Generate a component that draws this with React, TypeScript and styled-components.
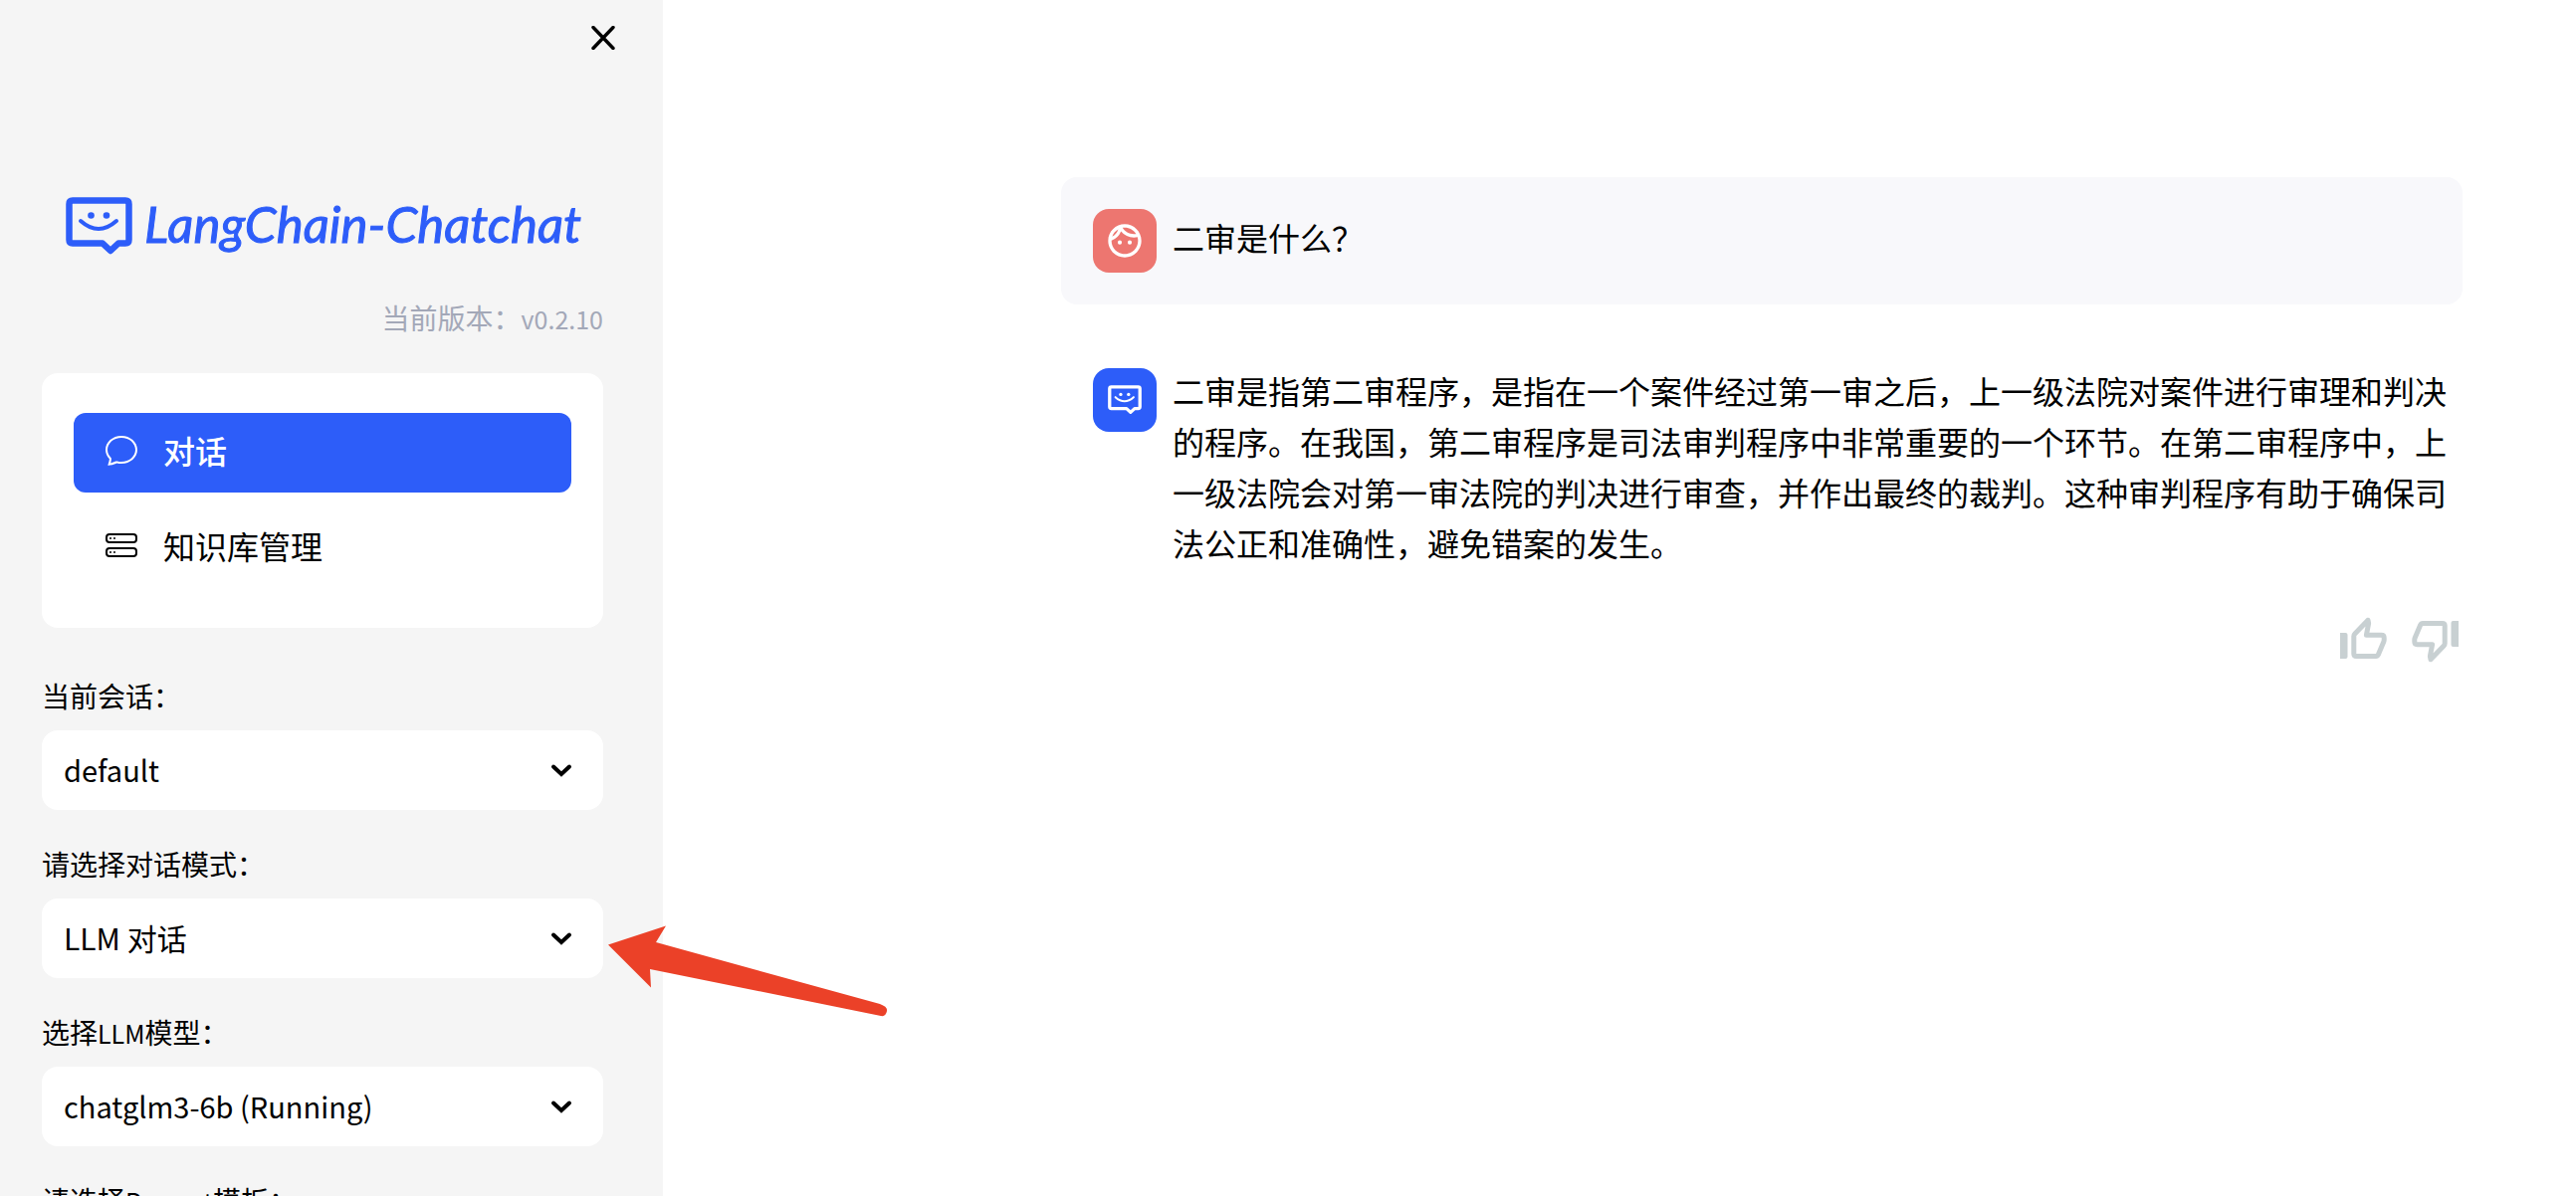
import React from "react";
import styled, { createGlobalStyle } from "styled-components";
import { BsChat, BsHddStack } from "react-icons/bs";
import { MdOutlineFace } from "react-icons/md";

const BLUE = "#2d5df9";

const GlobalStyle = createGlobalStyle`
  *, *::before, *::after { box-sizing: border-box; }
  html, body, #root { height: 100%; }
  body {
    margin: 0;
    background: #fff;
    color: #000;
    font-family: "Noto Sans CJK SC", sans-serif;
    font-size: 32px;
    overflow: hidden;
  }
  button, select { font-family: inherit; color: inherit; }
  svg { flex-shrink: 0; }
`;

const Page = styled.div`
  display: flex;
  height: 100vh;
  overflow: hidden;
`;

const Sidebar = styled.aside`
  position: relative;
  display: flex;
  flex-direction: column;
  flex: 0 0 666px;
  padding: 198px 60px 0 42px;
  background: #f5f5f5;
  overflow: hidden;

  > * { flex-shrink: 0; }
`;

const CloseButton = styled.button`
  position: absolute;
  top: 22px;
  right: 44px;
  display: flex;
  padding: 4px;
  border: 0;
  background: none;
  cursor: pointer;
`;

const Brand = styled.div`
  display: flex;
  align-items: flex-start;
  gap: 12px;
  height: 60px;
  padding-left: 24px;
  color: ${BLUE};
`;

const Wordmark = styled.h1`
  margin: 0;
  font: italic 400 51px/54px Lato, "Liberation Sans", sans-serif;
  white-space: nowrap;
  -webkit-text-stroke: 1px ${BLUE};
`;

const Version = styled.p`
  margin: 40px 0 34px;
  font-size: 28px;
  line-height: 43px;
  color: #a3a8b8;
  text-align: right;
`;

const Latin = styled.span`
  font-size: 25px;
  line-height: 1;
`;

const Menu = styled.nav`
  display: flex;
  flex-direction: column;
  gap: 16px;
  margin-bottom: 48px;
  padding: 40px 32px;
  border-radius: 16px;
  background: #fff;
`;

const MenuItem = styled.a<{ $active?: boolean }>`
  display: flex;
  align-items: center;
  gap: 26px;
  height: 80px;
  padding: 0 32px 6px;
  border-radius: 12px;
  background: ${(p) => (p.$active ? BLUE : "transparent")};
  color: ${(p) => (p.$active ? "#fff" : "#000")};
  font-weight: ${(p) => (p.$active ? 500 : 400)};
  line-height: 48px;
  text-decoration: none;
`;

const Field = styled.div`
  margin-bottom: 34px;
`;

const Label = styled.label`
  display: block;
  margin-bottom: 15px;
  font-size: 28px;
  line-height: 40px;
`;

const SelectBox = styled.div`
  display: grid;
  grid-template-columns: 1fr 64px;
  align-items: center;
  border-radius: 16px;
  background: #fff;

  > * { grid-row: 1; }
  > svg { grid-column: 2; pointer-events: none; }
`;

const Select = styled.select<{ $latin?: boolean }>`
  grid-column: 1 / -1;
  width: 100%;
  height: 80px;
  padding: 0 64px 3px 22px;
  border: 0;
  border-radius: 16px;
  background: transparent;
  font-size: ${(p) => (p.$latin ? 29 : 30)}px;
  appearance: none;
`;

const Main = styled.main`
  display: flex;
  flex-direction: column;
  flex: 1;
  gap: 32px;
  min-width: 0;
  padding: 178px 114px 0 400px;
`;

const MessageText = styled.p`
  flex: 1;
  margin: 0;
  line-height: 51px;
`;

const Message = styled.article<{ $user?: boolean }>`
  display: flex;
  gap: 16px;
  padding: 32px 16px 32px 32px;
  border-radius: 16px;
  background: ${(p) => (p.$user ? "#f8f8fb" : "transparent")};

  ${MessageText} { margin-top: ${(p) => (p.$user ? 3 : -3)}px; }
`;

const Avatar = styled.div<{ $color: string }>`
  display: flex;
  flex: 0 0 64px;
  align-items: center;
  justify-content: center;
  height: 64px;
  border-radius: 16px;
  background: ${(p) => p.$color};
  color: #fff;
`;

const Feedback = styled.div`
  display: flex;
  justify-content: flex-end;
  gap: 25px;
  margin-top: -15px;
  padding-right: 4px;
`;

const FeedbackButton = styled.button`
  display: flex;
  padding: 0;
  border: 0;
  background: none;
  cursor: pointer;
`;

const Pointer = styled.svg`
  position: absolute;
  left: 610px;
  top: 930px;
  pointer-events: none;
`;

function RobotMark({ width }: { width: number }) {
  return (
    <svg width={width} viewBox="0 0 67 58" fill="none" aria-hidden="true">
      <path
        d="M7 3.5H60Q63.500 3.500 63.500 7V43Q63.500 46.500 60 46.500H53L45 54L37 46.500H7Q3.500 46.500 3.500 43V7Q3.500 3.500 7 3.500Z"
        stroke="currentColor"
        strokeWidth="6.500"
        strokeLinejoin="round"
      />
      <circle cx="25.500" cy="18.500" r="3.300" fill="currentColor" />
      <circle cx="41" cy="18.500" r="3.300" fill="currentColor" />
      <path d="M15 24Q33 40 51 24" stroke="currentColor" strokeWidth="4" strokeLinecap="round" />
    </svg>
  );
}

function Thumb({ down }: { down?: boolean }) {
  return (
    <svg width="47" height="46" viewBox="0 0 47 46" fill="none" aria-hidden="true">
      <g transform={down ? "rotate(180 23.5 23)" : undefined}>
        <path d="M0 16H5.500Q7.500 16 7.500 18V40Q7.500 42 5.500 42H0Z" fill="#c8d0d2" />
        <path
          d="M13.800 37Q13.800 39.500 16.300 39.500H36Q37.600 39.500 38.300 38L43.800 25Q44.200 24 44.200 23V21Q44.200 18.300 41.500 18.300H26.400L28.600 6.500L28 3.300L14.800 17Q13.800 18 13.800 19.500Z"
          stroke="#c8d0d2"
          strokeWidth="5"
          strokeLinejoin="round"
        />
      </g>
    </svg>
  );
}

function Chevron() {
  return (
    <svg width="44" height="24" viewBox="0 0 44 24" fill="none" aria-hidden="true">
      <path d="M14 8.500L22 16L30 8.500" stroke="#000" strokeWidth="4" strokeLinecap="round" />
    </svg>
  );
}

type FieldData = { id: string; label: React.ReactNode; value: string; latin?: boolean };

const fields: FieldData[] = [
  { id: "session", label: "当前会话：", value: "default", latin: true },
  { id: "mode", label: "请选择对话模式：", value: "LLM 对话" },
  { id: "model", label: <>选择<Latin>LLM</Latin>模型：</>, value: "chatglm3-6b (Running)", latin: true },
  { id: "prompt", label: <>请选择<Latin>Prompt</Latin>模板：</>, value: "default", latin: true },
];

export default function App() {
  return (
    <Page>
      <GlobalStyle />
      <Sidebar>
        <CloseButton aria-label="Close sidebar">
          <svg width="24" height="24" viewBox="0 0 24 24" aria-hidden="true">
            <path d="M2 1.500L22 22.500M22 1.500L2 22.500" stroke="#000" strokeWidth="3.400" strokeLinecap="round" />
          </svg>
        </CloseButton>
        <Brand>
          <RobotMark width={67} />
          <Wordmark>LangChain-Chatchat</Wordmark>
        </Brand>
        <Version>当前版本：<Latin>v0.2.10</Latin></Version>
        <Menu>
          <MenuItem href="#chat" $active>
            <BsChat size={32} />
            对话
          </MenuItem>
          <MenuItem href="#knowledge">
            <BsHddStack size={32} />
            知识库管理
          </MenuItem>
        </Menu>
        {fields.map((f) => (
          <Field key={f.id}>
            <Label htmlFor={f.id}>{f.label}</Label>
            <SelectBox>
              <Select id={f.id} $latin={f.latin}>
                <option>{f.value}</option>
              </Select>
              <Chevron />
            </SelectBox>
          </Field>
        ))}
      </Sidebar>
      <Main>
        <Message $user>
          <Avatar $color="#ed7670">
            <MdOutlineFace size={40} />
          </Avatar>
          <MessageText>二审是什么？</MessageText>
        </Message>
        <Message>
          <Avatar $color={BLUE}>
            <RobotMark width={34} />
          </Avatar>
          <MessageText>
            二审是指第二审程序，是指在一个案件经过第一审之后，上一级法院对案件进行审理和判决的程序。在我国，第二审程序是司法审判程序中非常重要的一个环节。在第二审程序中，上一级法院会对第一审法院的判决进行审查，并作出最终的裁判。这种审判程序有助于确保司法公正和准确性，避免错案的发生。
          </MessageText>
        </Message>
        <Feedback>
          <FeedbackButton aria-label="Good answer">
            <Thumb />
          </FeedbackButton>
          <FeedbackButton aria-label="Bad answer">
            <Thumb down />
          </FeedbackButton>
        </Feedback>
      </Main>
      <Pointer width="282" height="94" viewBox="610 930 282 94" aria-hidden="true">
        <path d="M611 949.500L669 930.500L659 947L884 1009Q892 1012 891 1016Q890 1022 885 1021L653 974L654 992.500Z" fill="#eb4128" />
      </Pointer>
    </Page>
  );
}
